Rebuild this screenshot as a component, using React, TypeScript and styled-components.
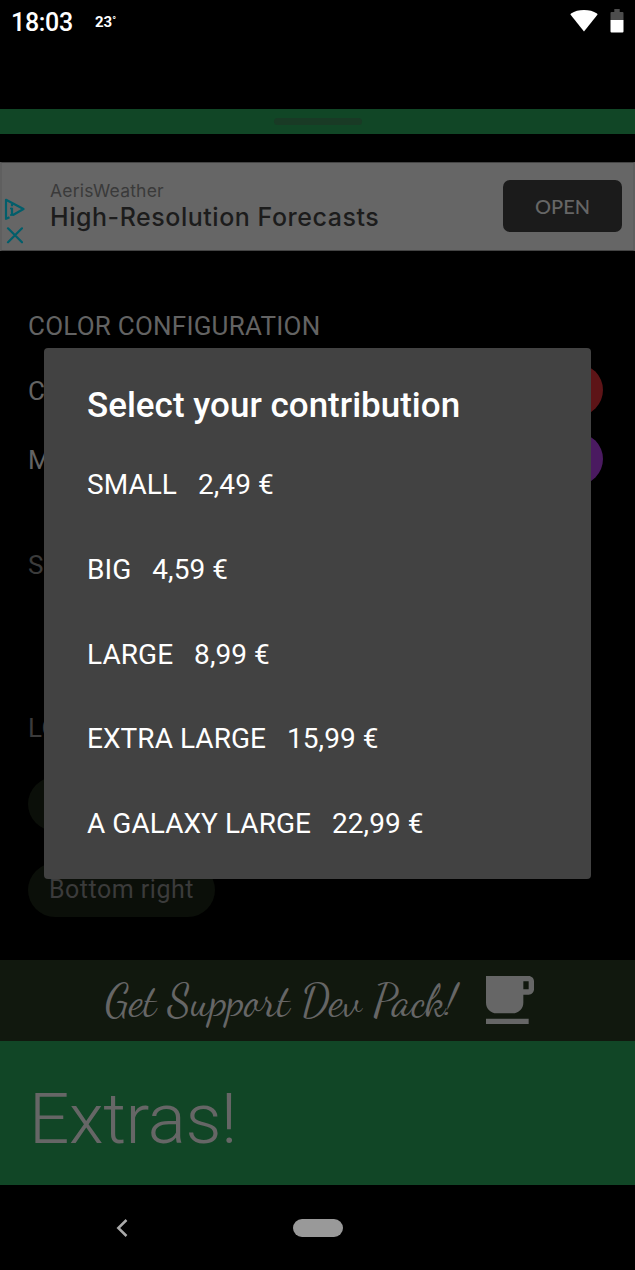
import React from "react";
import styled, { createGlobalStyle } from "styled-components";

const GlobalStyle = createGlobalStyle`
  *, *::before, *::after { box-sizing: border-box; }
  html, body { margin: 0; padding: 0; background: #000; }
  body { font-family: Roboto, "Liberation Sans", sans-serif; }
`;

const Screen = styled.div`
  position: relative;
  display: flex;
  flex-direction: column;
  width: 635px;
  height: 1270px;
  overflow: hidden;
  background: #000;
`;

const StatusBar = styled.header`
  display: flex;
  align-items: flex-start;
  height: 109px;
  padding: 0 11px 0 11px;
  color: #fff;
`;

const Clock = styled.span`
  width: 84px;
  font-size: 25px;
  font-weight: 500;
  line-height: 45px;
  letter-spacing: -0.3px;
`;

const Temperature = styled.span`
  flex: 1;
  font-size: 15px;
  font-weight: 700;
  line-height: 44px;
`;

const Degree = styled.span`
  font-size: 10px;
  position: relative;
  top: -3px;
`;

const StatusIcons = styled.div`
  display: flex;
  gap: 12px;
  padding-top: 9px;
`;

const SheetHeader = styled.div`
  display: flex;
  justify-content: center;
  align-items: center;
  height: 25px;
  background: #114626;
`;

const DragHandle = styled.div`
  width: 88px;
  height: 7px;
  border-radius: 4px;
  background: #193a25;
`;

const AdBanner = styled.section`
  display: flex;
  align-items: center;
  height: 89px;
  margin-top: 28px;
  padding-right: 11px;
  background: #666;
  border: 2px solid #5f5f5f;
  border-width: 1px 2px;
  border-top-color: #444;
  border-bottom-color: #444;
`;

const AdMarks = styled.div`
  display: flex;
  flex-direction: column;
  gap: 7px;
  width: 48px;
  padding: 29px 0 0 1px;
`;

const AdCopy = styled.div`
  flex: 1;
  padding-bottom: 3px;
  font-family: Inter, "Open Sans", sans-serif;
  white-space: nowrap;
`;

const Advertiser = styled.div`
  font-size: 17.5px;
  line-height: 25px;
  letter-spacing: 0.2px;
  color: #3a3a3a;
`;

const AdHeadline = styled.div`
  font-size: 25px;
  font-weight: 500;
  line-height: 29px;
  letter-spacing: 0.53px;
  color: #1c1c1c;
`;

const AdButton = styled.button`
  width: 119px;
  height: 52px;
  padding: 0;
  border: 0;
  border-radius: 7px;
  margin-bottom: 1px;
  background: #1b1b1b;
  color: #666;
  font: 500 20px/50px Lato, sans-serif;
`;

const Settings = styled.main`
  display: flex;
  flex-direction: column;
  height: 709px;
  padding: 53px 32px 0 28px;
  color: #636363;
  font-size: 26px;
`;

const SectionTitle = styled.div<{ $dim?: boolean; $top?: number }>`
  height: 44px;
  margin-top: ${(p) => p.$top ?? 0}px;
  line-height: 44px;
  letter-spacing: 0.23px;
  color: ${(p) => (p.$dim ? "#3b3b3b" : "#636363")};
`;

const ColorList = styled.div`
  padding-top: 7px;
`;

const ColorRow = styled.div`
  display: flex;
  justify-content: space-between;
  align-items: center;
  height: 69px;
`;

const ColorLabel = styled.span`
  padding-top: 2px;
`;

const Swatch = styled.span<{ $color: string }>`
  width: 52px;
  height: 52px;
  border-radius: 50%;
  background: ${(p) => p.$color};
`;

const Chip = styled.div<{ $top: number }>`
  align-self: flex-start;
  width: 187px;
  height: 54px;
  margin-top: ${(p) => p.$top}px;
  padding-left: 21px;
  border-radius: 27px;
  background: #0b0f09;
  color: #3b3b3b;
  font-size: 25px;
  line-height: 53px;
  letter-spacing: 0.5px;
  white-space: nowrap;
`;

const SupportBar = styled.section`
  display: flex;
  align-items: center;
  height: 81px;
  padding: 0 0 1px 105px;
  background: #11180e;
  color: #666;
`;

const SupportText = styled.span`
  width: 381px;
  font-family: "Dancing Script", cursive;
  font-size: 43.7px;
  line-height: 80px;
  padding-top: 1px;
  white-space: nowrap;
`;

const Extras = styled.section`
  height: 144px;
  padding-left: 29px;
  background: #114626;
  color: #666;
  font-size: 71px;
  font-weight: 300;
  line-height: 156px;
  letter-spacing: -0.4px;
`;

const NavBar = styled.nav`
  display: flex;
  align-items: center;
  height: 85px;
  padding-left: 116px;
`;

const HomePill = styled.span`
  width: 50px;
  height: 18px;
  margin-left: 165px;
  border-radius: 9px;
  background: #999;
`;

const Dialog = styled.div`
  position: absolute;
  left: 44px;
  top: 348px;
  width: 547px;
  height: 531px;
  padding: 37px 43px 0;
  border-radius: 4px;
  background: #424242;
  color: #fff;
`;

const DialogTitle = styled.h2`
  margin: 0 0 15.4px;
  font-size: 35px;
  font-weight: 500;
  line-height: 42px;
  white-space: nowrap;
`;

const Option = styled.div`
  display: flex;
  gap: 21px;
  height: 84.7px;
  align-items: center;
  font-size: 28px;
  letter-spacing: 0.05px;
  white-space: nowrap;
`;

const options = [
  ["SMALL", "2,49 €"],
  ["BIG", "4,59 €"],
  ["LARGE", "8,99 €"],
  ["EXTRA LARGE", "15,99 €"],
  ["A GALAXY LARGE", "22,99 €"],
];

export default function App() {
  return (
    <Screen>
      <GlobalStyle />
      <StatusBar>
        <Clock>18:03</Clock>
        <Temperature>
          23<Degree>°</Degree>
        </Temperature>
        <StatusIcons>
          <svg width="28" height="23" viewBox="0 0 28 23">
            <path d="M14 22.5 L0.6 5.8 Q0.2 5 1 4.4 Q6.5 1 14 1 Q21.5 1 27 4.4 Q27.8 5 27.4 5.8 Z" fill="#fff" />
          </svg>
          <svg width="14" height="24" viewBox="0 0 14 24">
            <path d="M4.3 0H9.7V3H12.5Q13.5 3 13.5 4V11H.5V4Q.5 3 1.5 3H4.3Z" fill="#4d4d4d" />
            <path d="M.5 11H13.5V22.5Q13.5 23.5 12.5 23.5H1.5Q.5 23.5 .5 22.5Z" fill="#fff" />
          </svg>
        </StatusIcons>
      </StatusBar>
      <SheetHeader>
        <DragHandle />
      </SheetHeader>
      <AdBanner>
        <AdMarks>
          <svg width="22" height="22" viewBox="0 0 22 22" fill="none" stroke="#025e6b" strokeWidth="2.2" strokeLinejoin="round">
            <path d="M6.5 19.2L3 20.8V1.8L20.5 11L10 17" />
            <path d="M9 9.8V17.5M9 6V8.2" strokeWidth="2.2" />
            <path d="M7 10.5H9M7 17H11" strokeWidth="1.3" />
          </svg>
          <svg width="20" height="17" viewBox="0 0 20 17" stroke="#025e6b" strokeWidth="2.2" strokeLinecap="round">
            <path d="M5 1.3L19 15.3M19 1.3L5 15.3" />
          </svg>
        </AdMarks>
        <AdCopy>
          <Advertiser>AerisWeather</Advertiser>
          <AdHeadline>High-Resolution Forecasts</AdHeadline>
        </AdCopy>
        <AdButton>OPEN</AdButton>
      </AdBanner>
      <Settings>
        <SectionTitle>COLOR CONFIGURATION</SectionTitle>
        <ColorList>
          <ColorRow>
            <ColorLabel>C</ColorLabel>
            <Swatch $color="#5d1417" />
          </ColorRow>
          <ColorRow>
            <ColorLabel>M</ColorLabel>
            <Swatch $color="#4a1a60" />
          </ColorRow>
        </ColorList>
        <SectionTitle $dim $top={50}>S</SectionTitle>
        <SectionTitle $dim $top={119}>LO</SectionTitle>
        <Chip $top={27} />
        <Chip $top={32}>Bottom right</Chip>
      </Settings>
      <SupportBar>
        <SupportText>Get Support Dev Pack!</SupportText>
        <svg width="48" height="48" viewBox="4 3 18 18" fill="#666">
          <path d="M20 3H4v10c0 2.210 1.790 4 4 4h6c2.210 0 4-1.790 4-4v-3h2c1.110 0 2-.9 2-2V5c0-1.110-.89-2-2-2zm0 5h-2V5h2v3zM4 19h16v2H4z" />
        </svg>
      </SupportBar>
      <Extras>Extras!</Extras>
      <NavBar>
        <svg width="12" height="18" viewBox="0 0 12 18" fill="none" stroke="#aaa" strokeWidth="2.5">
          <path d="M10.5 1L2.3 9L10.5 17" />
        </svg>
        <HomePill />
      </NavBar>
      <Dialog role="dialog">
        <DialogTitle>Select your contribution</DialogTitle>
        <div>
          {options.map(([name, price]) => (
            <Option key={name}>
              <span>{name}</span>
              <span>{price}</span>
            </Option>
          ))}
        </div>
      </Dialog>
    </Screen>
  );
}
